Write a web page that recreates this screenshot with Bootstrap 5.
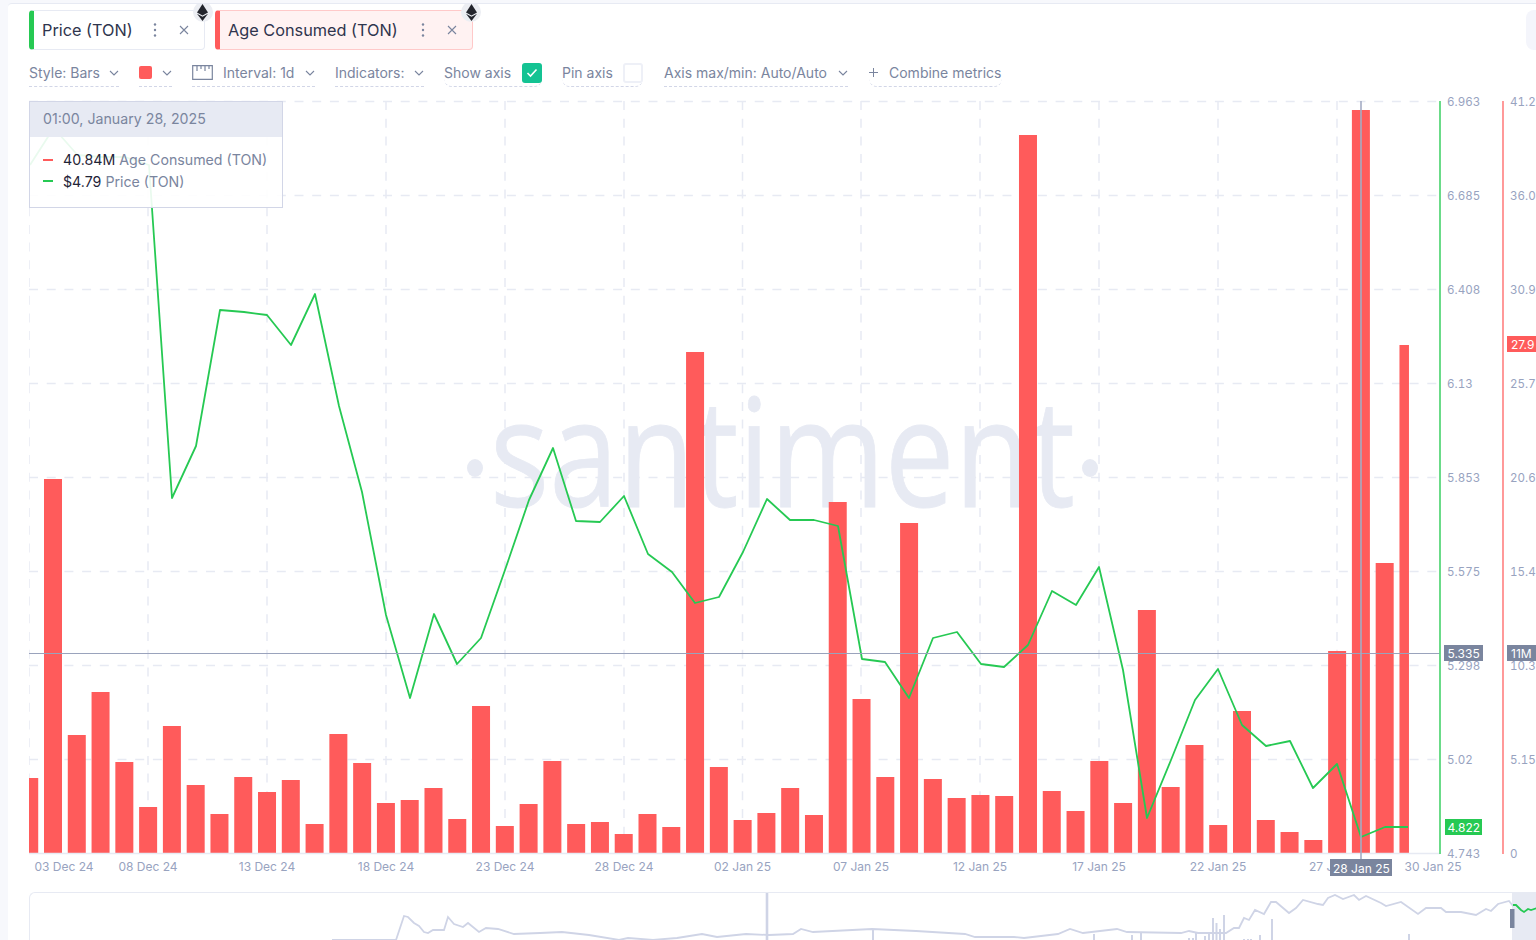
<!DOCTYPE html>
<html lang="en">
<head>
<meta charset="utf-8">
<title>Santiment chart - TON</title>
<link rel="stylesheet" href="https://cdn.jsdelivr.net/npm/bootstrap@5.3.0/dist/css/bootstrap.min.css">
<style>
html,body{height:940px;overflow:hidden;background:#f7f8fc;font-family:"Inter","Liberation Sans",sans-serif}
.shell{margin-left:8px;margin-top:3px;height:937px;background:#fff;border-top:1px solid #e7eaf3;border-top-left-radius:4px;padding-left:21px;overflow:hidden}
.tabs-row{padding-top:6px;height:46px}
.metric-tab{height:40px;background:#fff;border:1px solid #e7eaf3;border-left:5px solid #26c953;border-radius:4px;padding-left:8px;font-size:16.3px;color:#2f354d;position:relative;flex:none}
.metric-tab.tab-price{width:175.5px}
.metric-tab.tab-age{width:258px;margin-left:2.5px;background:#fff2f2;border-color:#ffc9c9;border-left-color:#ff5b5b}
.tab-label{flex:1 1 auto;white-space:nowrap}
.tab-icons{display:flex;align-items:center;gap:22px;padding-right:15px}
.eth-dot{position:absolute;top:-9px;right:-9px;width:20px;height:20px;border-radius:50%;background:#eceef3;display:flex;align-items:center;justify-content:center}
.side-stub{width:10px;height:40px;margin-left:auto;background:#f4f5fb;border-radius:8px 0 0 8px}
.tools-row{height:27px;margin-top:10px;gap:20px;font-size:14px;color:#7a859e;white-space:nowrap}
.tool-item{height:27px;display:flex;align-items:center;border-bottom:1px dashed #d2d6e7;padding-bottom:1px;flex:none}
.tool-soft{border-bottom-left-radius:8px;border-bottom-right-radius:8px}
.tool-nudge{margin-left:1px}
.ruler-glyph{margin-right:10px}
.plus-glyph{margin-right:11px}
.colour-chip{width:13px;height:13px;border-radius:2px;background:#ff5b5b}
.check-on,.check-off{width:20px;height:20px;border-radius:3px;display:flex;align-items:center;justify-content:center}
.check-on{background:#14c393}
.check-off{border:2px solid #eef0f7;background:#fff}
.chart-box{position:relative;margin-top:7px;height:798px}
.chart-box svg,.mini-box svg{display:block}
.gridline{stroke:#e7eaf3;stroke-width:1.5;stroke-dasharray:9 8.7}
.tick{font-size:12px;fill:#98a3bf}
.tick-num{font-size:11.6px;fill:#98a3bf;font-variant-numeric:tabular-nums}
.tag-text{font-size:12px;fill:#fff}
.wm{font-family:"Open Sans",sans-serif;font-weight:400;font-size:150px;fill:#e7eaf3;stroke:#e7eaf3;stroke-width:.8}
.hover-card{position:absolute;left:0;top:7px;width:254px;height:107px;background:rgba(255,255,255,.9);border:1px solid #d2d6e7;font-size:14.2px;color:#7a859e}
.hover-head{height:35px;background:#e7eaf3;padding:0 0 2px 13px;display:flex;align-items:center}
.hover-body{padding-top:12px}
.hover-row{display:flex;align-items:center;height:21.5px;padding-left:13px;white-space:nowrap}
.hover-dash{width:10px;height:2px;margin-right:10px}
.hover-val{color:#1f2437;margin-right:4px}
.mini-box{height:60px;border:1px solid #e7eaf3;border-radius:6px 0 0 0;border-right:0;overflow:hidden}
</style>
</head>
<body>
<div class="shell">
  <div class="tabs-row d-flex gap-2">
    <div class="metric-tab tab-price d-flex align-items-center">
      <span class="tab-label">Price (TON)</span>
      <span class="tab-icons">
        <svg width="4" height="16" viewBox="0 0 4 16"><g fill="#7a859e"><circle cx="2" cy="2.5" r="1.2"/><circle cx="2" cy="8" r="1.2"/><circle cx="2" cy="13.5" r="1.2"/></g></svg>
        <svg width="10" height="10" viewBox="0 0 10 10"><path d="M1 1l8 8M9 1l-8 8" stroke="#7a859e" stroke-width="1.1"/></svg>
      </span>
      <span class="eth-dot"><svg width="11" height="17" viewBox="0 0 11 17"><path d="M5.5 0L11 8.4 5.5 11.4 0 8.4z" fill="#23252d"/><path d="M0 9.8l5.5 3 5.5-3L5.5 17z" fill="#23252d"/></svg></span>
    </div>
    <div class="metric-tab tab-age d-flex align-items-center">
      <span class="tab-label">Age Consumed (TON)</span>
      <span class="tab-icons">
        <svg width="4" height="16" viewBox="0 0 4 16"><g fill="#7a859e"><circle cx="2" cy="2.5" r="1.2"/><circle cx="2" cy="8" r="1.2"/><circle cx="2" cy="13.5" r="1.2"/></g></svg>
        <svg width="10" height="10" viewBox="0 0 10 10"><path d="M1 1l8 8M9 1l-8 8" stroke="#7a859e" stroke-width="1.1"/></svg>
      </span>
      <span class="eth-dot"><svg width="11" height="17" viewBox="0 0 11 17"><path d="M5.5 0L11 8.4 5.5 11.4 0 8.4z" fill="#23252d"/><path d="M0 9.8l5.5 3 5.5-3L5.5 17z" fill="#23252d"/></svg></span>
    </div>
    <div class="side-stub"></div>
  </div>

  <div class="tools-row d-flex">
    <div class="tool-item" style="width:90px"><span>Style: Bars</span><svg class="ms-auto" width="10" height="6" viewBox="0 0 10 6"><path d="M1 1l4 4 4-4" fill="none" stroke="#7a859e" stroke-width="1.1"/></svg></div>
    <div class="tool-item" style="width:33px"><span class="colour-chip"></span><svg class="ms-auto" width="10" height="6" viewBox="0 0 10 6"><path d="M1 1l4 4 4-4" fill="none" stroke="#7a859e" stroke-width="1.1"/></svg></div>
    <div class="tool-item" style="width:123px"><svg class="ruler-glyph" width="21" height="15" viewBox="0 0 21 15"><path d="M.7.7h19.6v13.6H.7zM5 1v5M9 1v3M13 1v5M17 1v3" fill="none" stroke="#7a859e" stroke-width="1.2"/></svg><span>Interval: 1d</span><svg class="ms-auto" width="10" height="6" viewBox="0 0 10 6"><path d="M1 1l4 4 4-4" fill="none" stroke="#7a859e" stroke-width="1.1"/></svg></div>
    <div class="tool-item" style="width:89px"><span>Indicators:</span><svg class="ms-auto" width="10" height="6" viewBox="0 0 10 6"><path d="M1 1l4 4 4-4" fill="none" stroke="#7a859e" stroke-width="1.1"/></svg></div>
    <div class="tool-item tool-soft" style="width:98px"><span>Show axis</span><span class="check-on ms-auto"><svg width="12" height="10" viewBox="0 0 12 10"><path d="M1.5 5l3 3 6-6.5" fill="none" stroke="#fff" stroke-width="1.6"/></svg></span></div>
    <div class="tool-item tool-soft" style="width:81px"><span>Pin axis</span><span class="check-off ms-auto"></span></div>
    <div class="tool-item tool-nudge" style="width:184px"><span>Axis max/min: Auto/Auto</span><svg class="ms-auto" width="10" height="6" viewBox="0 0 10 6"><path d="M1 1l4 4 4-4" fill="none" stroke="#7a859e" stroke-width="1.1"/></svg></div>
    <div class="tool-item tool-soft tool-nudge" style="width:133px"><svg class="plus-glyph" width="9" height="9" viewBox="0 0 9 9"><path d="M4.5 0v9M0 4.5h9" stroke="#7a859e" stroke-width="1"/></svg><span>Combine metrics</span></div>
  </div>

  <div class="chart-box">
    <svg id="chart" width="1507" height="798" viewBox="29 94 1507 798" xmlns="http://www.w3.org/2000/svg">
      <g id="grid"></g>
      <text class="wm" x="490" y="507" textLength="585" lengthAdjust="spacingAndGlyphs">santiment</text>
      <ellipse cx="475" cy="468" rx="8" ry="9" fill="#e7eaf3"/>
      <ellipse cx="1090" cy="468" rx="8" ry="9" fill="#e7eaf3"/>
      <g id="bars" fill="#ff5b5b"></g>
      <line x1="29" y1="853.5" x2="1440" y2="853.5" stroke="#e7eaf3" stroke-width="1.5"/>
      <polyline id="price" fill="none" stroke="#26c953" stroke-width="1.8" stroke-linejoin="round" points="30,165 53.7,128 77.5,155 101,157 125,157 149,165 172,498 196,446 220,310 244,312 267,315 291,345 315,294 339,406 362,492 386,615 410,698 434,614 457,664 481,638 505,570 529,500 553,448 576,521 600,522 624,496 648,554 672,572 695,603 719,597 743,552 767,499 790,520 814,520 838,526 862,659 885,662 909,698 933,638 957,632 981,664 1004,667 1028,645 1052,591 1076,605 1099,567 1123,670 1147,818 1171,760 1195,700 1218,669 1242,725 1266,746 1290,741 1313,788 1337,764 1361,837 1385,827 1408,827"/>
      <line x1="29" y1="653.5" x2="1440" y2="653.5" stroke="#9aa3bc" stroke-width="1"/>
      <line x1="1361" y1="101" x2="1361" y2="860" stroke="#a4acc4" stroke-width="1.6"/>
      <line x1="1440" y1="101" x2="1440" y2="854" stroke="#5bd77c" stroke-width="1.8"/>
      <line x1="1503" y1="101" x2="1503" y2="854" stroke="#ff8080" stroke-width="1.6"/>
      <g id="nums" class="tick-num"></g>
      <g id="ticks" class="tick"></g>
      <rect x="1444" y="645" width="39" height="16" fill="#7a859e"/><text class="tag-text" x="1447.5" y="657.5">5.335</text>
      <rect x="1507" y="645" width="29" height="16" fill="#7a859e"/><text class="tag-text" x="1511" y="657.5">11M</text>
      <rect x="1507" y="336" width="29" height="16" fill="#ff5b5b"/><text class="tag-text" x="1511" y="348.5">27.9</text>
      <rect x="1445" y="819" width="37" height="16" fill="#26c953"/><text class="tag-text" x="1447.5" y="831.5">4.822</text>
      <rect x="1330" y="859" width="62" height="17" fill="#7a859e"/><text class="tag-text" x="1333" y="872.5">28 Jan 25</text>
    </svg>
    <div class="hover-card">
      <div class="hover-head">01:00, January 28, 2025</div>
      <div class="hover-body">
        <div class="hover-row"><span class="hover-dash" style="background:#ff5b5b"></span><span class="hover-val">40.84M</span>Age Consumed (TON)</div>
        <div class="hover-row"><span class="hover-dash" style="background:#26c953"></span><span class="hover-val">$4.79</span>Price (TON)</div>
      </div>
    </div>
  </div>

  <div class="mini-box">
    <svg width="1507" height="48" viewBox="29 892 1507 48" xmlns="http://www.w3.org/2000/svg">
      <rect x="1511" y="892" width="25" height="48" fill="#e7eaf3"/>
      <path d="M872 928v12M1212 917v23M1215.5 922v18M1219 928v12M1223 914v26M1271 918v22M1093 933v7M1131 934v6M1140 932v8M1188 937v3M1192 937v3M1195 932v8M1204 935v5M1208 932v8M1243 938v2M1247 938v2M1250 938v2M1259 934v6M1408 933v7" stroke="#cfd4e6" stroke-width="2" fill="none"/>
      <path d="M766 892v48" stroke="#cfd4e6" stroke-width="2.6"/>
      <polyline fill="none" stroke="#cfd4e6" stroke-width="1.8" points="331,939 353,939 395,939 403,915 407,916 413,922 418,925 423,931 427,932 432,929 443,929 447,916 453,923 462,926 467,922 478,931 485,927 497,928 513,933 539,932 561,931 588,934 618,939 627,937 652,939 676,937 701,933 716,936 745,933 768,934 792,933 800,928 812,931 871,928 915,930 964,933 974,936 1013,936 1023,937 1057,933 1069,928 1082,932 1116,928 1126,931 1180,932 1188,930 1197,932 1225,932 1233,927 1238,927 1243,917 1248,919 1254,909 1263,913 1270,901 1275,901 1288,912 1295,907 1302,899 1317,903 1322,904 1327,897 1334,894 1342,898 1353,894 1358,899 1365,895 1380,902 1385,905 1400,901 1417,913 1425,907 1440,907 1445,911 1460,911 1475,914 1485,908 1490,910 1497,903 1508,900 1512,905"/>
      <polyline fill="none" stroke="#26c953" stroke-width="1.8" points="1512,904 1515,904 1520,909 1523,911 1527,908 1530,909 1536,907"/>
      <rect x="1509" y="908" width="4.5" height="19" fill="#7a859e"/>
    </svg>
  </div>
</div>
<script>
(function(){
var NS='http://www.w3.org/2000/svg';
function el(p,n,a,t){var e=document.createElementNS(NS,n);for(var k in a)e.setAttribute(k,a[k]);if(t)e.textContent=t;p.appendChild(e);return e;}
var tops=[778,479,735,692,762,807,726,785,814,777,792,780,824,734,763,803,800,788,819,706,826,804,761,824,822,834,814,827,352,767,820,813,788,815,502,699,777,523,779,798,795,796,135,791,811,761,803,610,787,745,825,711,820,832,840,651,110,563,345];
var bars=document.getElementById('bars');
tops.forEach(function(t,i){
  var x=20.22+23.78*i,w=18;
  if(i===0){w=x+18-29;x=29;}
  if(i===58){w=9.5;}
  el(bars,'rect',{x:x.toFixed(2),y:t,width:w.toFixed(2),height:853-t});
});
var grid=document.getElementById('grid');
[101,195,289,383,477,571,665,759].forEach(function(y){el(grid,'line',{class:'gridline',x1:29,x2:1440,y1:y+.5,y2:y+.5});});
[29,148,267,386,505,624,742.5,861,980,1099,1218,1337].forEach(function(x){el(grid,'line',{class:'gridline',x1:x,x2:x,y1:101,y2:853});});
var nums=document.getElementById('nums');
[['6.963',101],['6.685',195],['6.408',289],['6.13',383],['5.853',477],['5.575',571],['5.298',665],['5.02',759],['4.743',853]].forEach(function(a){el(nums,'text',{x:1447,y:a[1]+4.5},a[0]);});
[['41.2',101],['36.0',195],['30.9',289],['25.7',383],['20.6',477],['15.4',571],['10.3',665],['5.15',759],['0',853]].forEach(function(a){el(nums,'text',{x:1510,y:a[1]+4.5},a[0]);});
var ticks=document.getElementById('ticks');
[['03 Dec 24',64],['08 Dec 24',148],['13 Dec 24',267],['18 Dec 24',386],['23 Dec 24',505],['28 Dec 24',624],['02 Jan 25',742.5],['07 Jan 25',861],['12 Jan 25',980],['17 Jan 25',1099],['22 Jan 25',1218],['27 Jan 25',1337],['30 Jan 25',1433]].forEach(function(a){el(ticks,'text',{x:a[1],y:870.5,'text-anchor':'middle'},a[0]);});
})();
</script>
<script src="https://cdn.jsdelivr.net/npm/bootstrap@5.3.0/dist/js/bootstrap.bundle.min.js"></script>
</body>
</html>
